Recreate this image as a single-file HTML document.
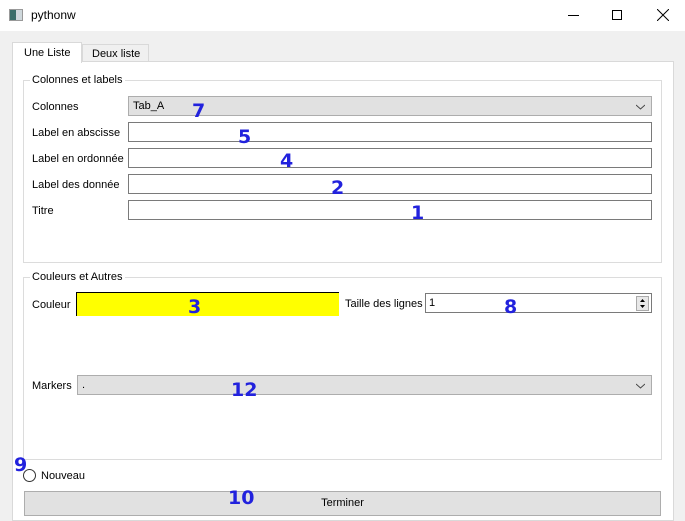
<!DOCTYPE html>
<html><head><style>
*{box-sizing:border-box;margin:0;padding:0}
body{width:685px;height:506px;overflow:hidden;background:#f0f0f0;font-family:"Liberation Sans",sans-serif;font-size:11px;color:#000;position:relative}
.a{position:absolute}
.n{position:absolute;color:#2222dd;font-family:"DejaVu Sans",sans-serif;font-weight:bold;font-size:19px;line-height:20px}
.in{position:absolute;background:#fff;border:1px solid #7a7a7a;height:20px}
.cb{position:absolute;background:#e1e1e1;border:1px solid #adadad;height:20px;padding:3px 4px}
.gb{position:absolute;border:1px solid #dcdcdc}
.gt{position:absolute;background:#fff;padding:0 2px;top:-7px;left:6px}
</style></head><body>
<div class="a" style="left:0;top:0;width:685px;height:31px;background:#fff"></div>
<div class="a" style="left:9px;top:9px;width:14px;height:12px;border:1px solid #999;background:linear-gradient(90deg,#3a6e6a 0 6px,#cfd8dc 6px)"></div>
<div class="a" style="left:31px;top:8px;font-size:12px">pythonw</div>
<div class="a" style="left:568px;top:15px;width:11px;height:1px;background:#000"></div>
<div class="a" style="left:612px;top:10px;width:10px;height:10px;border:1px solid #000"></div>
<svg class="a" style="left:657px;top:9px" width="12" height="12"><path d="M0 0L12 12M12 0L0 12" stroke="#000" stroke-width="1"/></svg>
<div class="a" style="left:12px;top:61px;width:662px;height:460px;background:#fff;border:1px solid #d9d9d9"></div>
<div class="a" style="left:12px;top:42px;width:70px;height:21px;background:#fff;border:1px solid #d9d9d9;border-bottom:none;padding:4px 0 0 11px">Une Liste</div>
<div class="a" style="left:82px;top:44px;width:67px;height:18px;background:#f0f0f0;border:1px solid #d9d9d9;padding:3px 0 0 9px">Deux liste</div>
<div class="gb" style="left:23px;top:80px;width:639px;height:183px"><span class="gt">Colonnes et labels</span></div>
<div class="a" style="left:32px;top:101px">Colonnes</div>
<div class="cb" style="left:128px;top:96px;width:524px">Tab_A<svg class="a" style="right:6px;top:7px" width="9" height="6"><path d="M0 1L4.5 5L9 1" stroke="#444" fill="none"/></svg></div>
<div class="a" style="left:32px;top:127px">Label en abscisse</div>
<div class="in" style="left:128px;top:122px;width:524px"></div>
<div class="a" style="left:32px;top:153px">Label en ordonnée</div>
<div class="in" style="left:128px;top:148px;width:524px"></div>
<div class="a" style="left:32px;top:179px">Label des donnée</div>
<div class="in" style="left:128px;top:174px;width:524px"></div>
<div class="a" style="left:32px;top:205px">Titre</div>
<div class="in" style="left:128px;top:200px;width:524px"></div>
<div class="gb" style="left:23px;top:277px;width:639px;height:183px"><span class="gt">Couleurs et Autres</span></div>
<div class="a" style="left:32px;top:299px">Couleur</div>
<div class="a" style="left:76px;top:292px;width:263px;height:24px;background:#ffff00;border-top:1px solid #000;border-left:1px solid #000"></div>
<div class="a" style="left:345px;top:298px">Taille des lignes</div>
<div class="in" style="left:425px;top:293px;width:227px;padding:3px 3px">1
<div class="a" style="right:2px;top:2px;width:13px;height:15px;background:#e8e8e8;border:1px solid #aaa"><svg width="11" height="13"><path d="M3 5L5.5 2L8 5Z M3 8L5.5 11L8 8Z" fill="#000"/></svg></div></div>
<div class="a" style="left:32px;top:380px">Markers</div>
<div class="cb" style="left:77px;top:375px;width:575px">.<svg class="a" style="right:6px;top:7px" width="9" height="6"><path d="M0 1L4.5 5L9 1" stroke="#444" fill="none"/></svg></div>
<div class="a" style="left:23px;top:469px;width:13px;height:13px;border:1px solid #333;border-radius:50%;background:#fff"></div>
<div class="a" style="left:41px;top:470px">Nouveau</div>
<div class="a" style="left:24px;top:491px;width:637px;height:25px;background:#e1e1e1;border:1px solid #adadad;text-align:center;padding-top:5px">Terminer</div>
<div class="n" style="left:192px;top:101px">7</div>
<div class="n" style="left:238px;top:127px">5</div>
<div class="n" style="left:280px;top:151px">4</div>
<div class="n" style="left:331px;top:178px">2</div>
<div class="n" style="left:411px;top:203px">1</div>
<div class="n" style="left:188px;top:297px">3</div>
<div class="n" style="left:504px;top:297px">8</div>
<div class="n" style="left:231px;top:380px">12</div>
<div class="n" style="left:14px;top:455px">9</div>
<div class="n" style="left:228px;top:488px">10</div>
</body></html>
